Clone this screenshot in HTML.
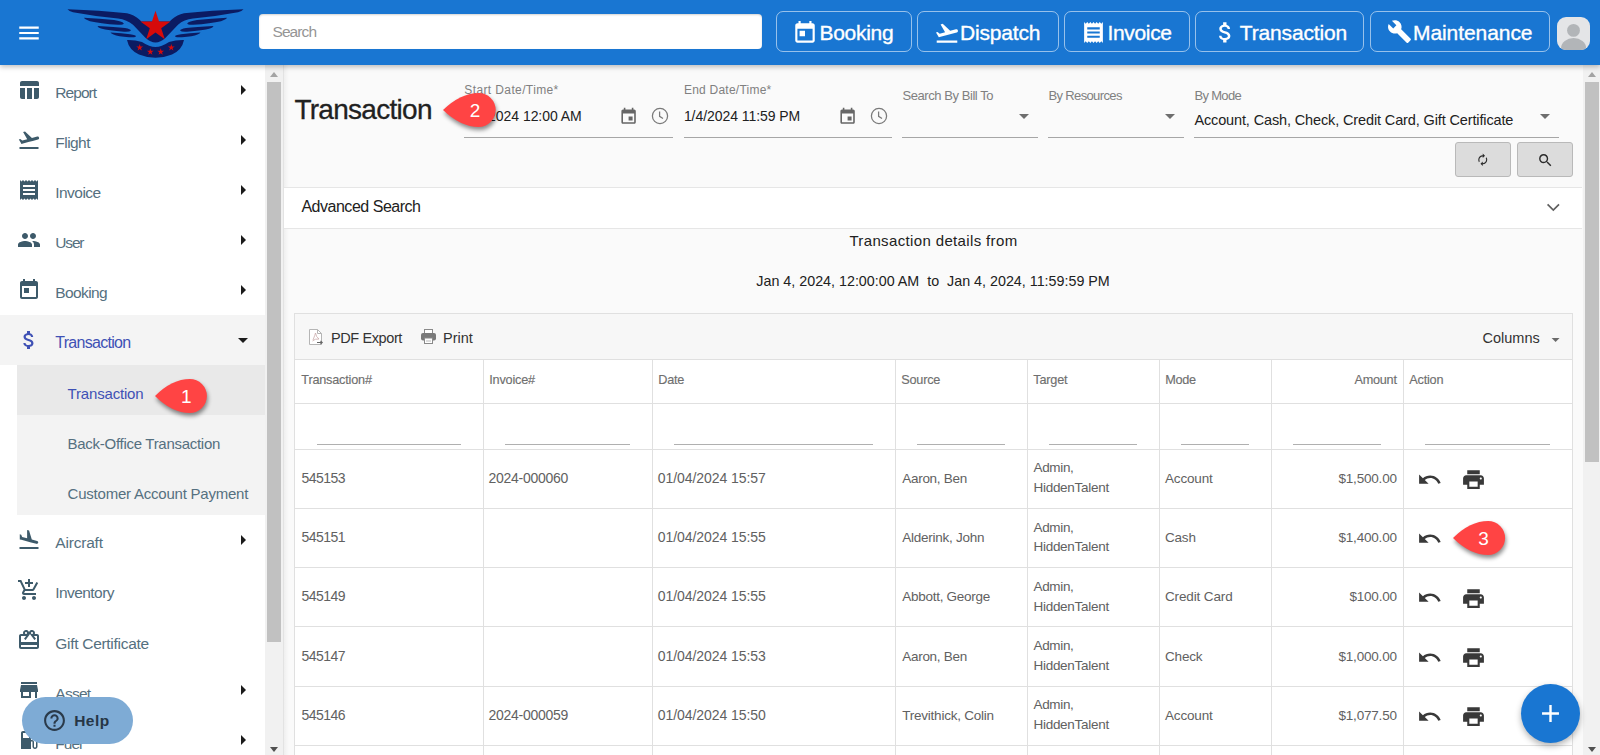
<!DOCTYPE html><html><head><meta charset="utf-8"><style>
html,body{margin:0;padding:0;}
body{width:1600px;height:755px;overflow:hidden;position:relative;background:#fafafa;font-family:"Liberation Sans",sans-serif;}
.t{position:absolute;white-space:nowrap;line-height:1;}
svg{display:block}
</style></head><body>
<div style="position:absolute;left:0px;top:65px;width:265px;height:690px;background:#fff"></div>
<div style="position:absolute;left:265px;top:65px;width:18px;height:690px;background:#f1f1f1"></div>
<div style="position:absolute;left:267px;top:82px;width:14px;height:560px;background:#c1c1c1"></div>
<div style="position:absolute;left:283px;top:65px;width:1px;height:690px;background:#e3e3e3"></div>
<div style="position:absolute;left:284px;top:65px;width:5px;height:690px;background:linear-gradient(to right,rgba(0,0,0,.045),rgba(0,0,0,0))"></div>
<div style="position:absolute;left:270px;top:72px;width:0;height:0;border-left:4px solid transparent;border-right:4px solid transparent;border-bottom:5px solid #a3a3a3"></div>
<div style="position:absolute;left:270px;top:747px;width:0;height:0;border-left:4px solid transparent;border-right:4px solid transparent;border-top:5px solid #505050"></div>
<div style="position:absolute;left:0px;top:315px;width:265px;height:50px;background:#f4f4f4"></div>
<div style="position:absolute;left:17px;top:365px;width:248px;height:150px;background:#f3f3f3"></div>
<div style="position:absolute;left:17px;top:365px;width:248px;height:50px;background:#e9e9e9"></div>
<svg style="position:absolute;left:16.5px;top:78px;" width="24" height="24" viewBox="0 0 24 24"><path fill="#3d5a6a" d="M10 10.02h5V21h-5zM17 21h3c1.1 0 2-.9 2-2v-9h-5v11zm3-18H5c-1.1 0-2 .9-2 2v3h19V5c0-1.1-.9-2-2-2zM3 19c0 1.1.9 2 2 2h3V10H3v9z"/></svg>
<div class="t" style="left:55.30px;top:84.78px;font-size:15.5px;color:#557080;letter-spacing:-0.945px;">Report</div>
<svg style="position:absolute;left:231px;top:78px;" width="24" height="24" viewBox="0 0 24 24"><path fill="#1a1a1a" d="M10 17l5-5-5-5v10z"/></svg>
<svg style="position:absolute;left:16.5px;top:128px;" width="24" height="24" viewBox="0 0 24 24"><path fill="#3d5a6a" d="M2.5 19h19v2h-19v-2zm19.57-9.36c-.21-.8-1.04-1.28-1.84-1.06L14.92 10l-6.9-6.43-1.930.51 4.14 7.17-4.97 1.33-1.97-1.54-1.45.39 1.82 3.16.77 1.33 1.6-.43 5.31-1.42 4.35-1.16L21 11.49c.81-.23 1.28-1.05 1.07-1.85z"/></svg>
<div class="t" style="left:55.30px;top:134.85px;font-size:15.5px;color:#557080;letter-spacing:-0.541px;">Flight</div>
<svg style="position:absolute;left:231px;top:128px;" width="24" height="24" viewBox="0 0 24 24"><path fill="#1a1a1a" d="M10 17l5-5-5-5v10z"/></svg>
<svg style="position:absolute;left:16.5px;top:178px;" width="24" height="24" viewBox="0 0 24 24"><path fill="#3d5a6a" d="M18 17H6v-2h12v2zm0-4H6v-2h12v2zm0-4H6V7h12v2zM3 22l1.5-1.5L6 22l1.5-1.5L9 22l1.5-1.5L12 22l1.5-1.5L15 22l1.5-1.5L18 22l1.5-1.5L21 22V2l-1.5 1.5L18 2l-1.5 1.5L15 2l-1.5 1.5L12 2l-1.5 1.5L9 2 7.5 3.5 6 2 4.5 3.5 3 2v20z"/></svg>
<div class="t" style="left:55.30px;top:184.92px;font-size:15.5px;color:#557080;letter-spacing:-0.552px;">Invoice</div>
<svg style="position:absolute;left:231px;top:178px;" width="24" height="24" viewBox="0 0 24 24"><path fill="#1a1a1a" d="M10 17l5-5-5-5v10z"/></svg>
<svg style="position:absolute;left:16.5px;top:228px;" width="24" height="24" viewBox="0 0 24 24"><path fill="#3d5a6a" d="M16 11c1.66 0 2.99-1.34 2.99-3S17.66 5 16 5c-1.66 0-3 1.34-3 3s1.34 3 3 3zm-8 0c1.66 0 2.99-1.34 2.99-3S9.66 5 8 5C6.34 5 5 6.34 5 8s1.34 3 3 3zm0 2c-2.33 0-7 1.170-7 3.5V19h14v-2.5c0-2.33-4.67-3.5-7-3.5zm8 0c-.29 0-.62.02-.97.05 1.16.84 1.97 1.97 1.97 3.45V19h6v-2.5c0-2.33-4.67-3.5-7-3.5z"/></svg>
<div class="t" style="left:55.30px;top:234.99px;font-size:15.5px;color:#557080;letter-spacing:-1.176px;">User</div>
<svg style="position:absolute;left:231px;top:228px;" width="24" height="24" viewBox="0 0 24 24"><path fill="#1a1a1a" d="M10 17l5-5-5-5v10z"/></svg>
<svg style="position:absolute;left:16.5px;top:278px;" width="24" height="24" viewBox="0 0 24 24"><path fill="#3d5a6a" d="M19 3h-1V1h-2v2H8V1H6v2H5c-1.11 0-1.99.9-1.99 2L3 19c0 1.1.89 2 2 2h14c1.1 0 2-.9 2-2V5c0-1.1-.9-2-2-2zm0 16H5V8h14v11zM7 10h5v5H7z"/></svg>
<div class="t" style="left:55.30px;top:285.06px;font-size:15.5px;color:#557080;letter-spacing:-0.619px;">Booking</div>
<svg style="position:absolute;left:231px;top:278px;" width="24" height="24" viewBox="0 0 24 24"><path fill="#1a1a1a" d="M10 17l5-5-5-5v10z"/></svg>
<svg style="position:absolute;left:16.5px;top:528px;" width="24" height="24" viewBox="0 0 24 24"><path fill="#3d5a6a" d="M2.5 19h19v2h-19v-2zm7.18-5.73l4.35 1.16 5.31 1.42c.8.21 1.62-.26 1.84-1.06.21-.8-.26-1.62-1.06-1.840l-5.31-1.42-2.76-9.02L10.12 2v8.28L5.15 8.95l-.93-2.32-1.45-.39v5.17l1.6.43 5.31 1.43z"/></svg>
<div class="t" style="left:55.30px;top:535.41px;font-size:15.5px;color:#557080;letter-spacing:-0.199px;">Aircraft</div>
<svg style="position:absolute;left:231px;top:528px;" width="24" height="24" viewBox="0 0 24 24"><path fill="#1a1a1a" d="M10 17l5-5-5-5v10z"/></svg>
<svg style="position:absolute;left:16.5px;top:578px;" width="24" height="24" viewBox="0 0 24 24"><path fill="#3d5a6a" d="M11 9h2V6h3V4h-3V1h-2v3H8v2h3v3zm-4 9c-1.1 0-1.99.9-1.99 2S5.9 22 7 22s2-.9 2-2-.9-2-2-2zm10 0c-1.1 0-1.99.9-1.99 2s.89 2 1.99 2 2-.9 2-2-.9-2-2-2zm-9.83-3.25l.03-.12.9-1.63h7.45c.75 0 1.41-.41 1.75-1.03l3.86-7.01L19.42 4h-.01l-1.1 2-2.76 5H8.53l-.13-.27L6.16 6l-.95-2-.94-2H1v2h2l3.6 7.59-1.35 2.45c-.16.28-.25.61-.25.96 0 1.1.9 2 2 2h12v-2H7.42c-.13 0-.25-.11-.25-.25z"/></svg>
<div class="t" style="left:55.30px;top:585.48px;font-size:15.5px;color:#557080;letter-spacing:-0.570px;">Inventory</div>
<svg style="position:absolute;left:16.5px;top:628px;" width="24" height="24" viewBox="0 0 24 24"><path fill="#3d5a6a" d="M20 6h-2.18c.11-.31.18-.65.18-1 0-1.66-1.34-3-3-3-1.05 0-1.96.54-2.5 1.35l-.5.67-.5-.68C10.96 2.54 10.05 2 9 2 7.34 2 6 3.34 6 5c0 .35.07.69.18 1H4c-1.11 0-1.99.89-1.99 2L2 19c0 1.11.89 2 2 2h16c1.11 0 2-.89 2-2V8c0-1.11-.89-2-2-2zm-5-2c.55 0 1 .45 1 1s-.45 1-1 1-1-.45-1-1 .45-1 1-1zM9 4c.55 0 1 .45 1 1s-.45 1-1 1-1-.45-1-1 .45-1 1-1zm11 15H4v-2h16v2zm0-5H4V8h5.08L7 10.83 8.62 12 11 8.76l1-1.36 1-1.36 1 1.36 1 1.36L17.38 12 19 10.83 16.92 8H20v6z"/></svg>
<div class="t" style="left:55.30px;top:635.55px;font-size:15.5px;color:#557080;letter-spacing:-0.293px;">Gift Certificate</div>
<svg style="position:absolute;left:16.5px;top:678px;" width="24" height="24" viewBox="0 0 24 24"><path fill="#3d5a6a" d="M20 4H4v2h16V4zm1 10v-2l-1-5H4l-1 5v2h1v6h10v-6h4v6h2v-6h1zm-9 4H6v-4h6v4z"/></svg>
<div class="t" style="left:55.30px;top:685.62px;font-size:15.5px;color:#557080;letter-spacing:-0.741px;">Asset</div>
<svg style="position:absolute;left:231px;top:678px;" width="24" height="24" viewBox="0 0 24 24"><path fill="#1a1a1a" d="M10 17l5-5-5-5v10z"/></svg>
<svg style="position:absolute;left:16.5px;top:728px;" width="24" height="24" viewBox="0 0 24 24"><path fill="#3d5a6a" d="M19.77 7.23l.01-.01-3.72-3.72L15 4.56l2.11 2.11c-.94.36-1.61 1.26-1.61 2.33 0 1.38 1.12 2.5 2.5 2.5.36 0 .69-.08 1-.21v7.21c0 .55-.45 1-1 1s-1-.45-1-1V14c0-1.1-.9-2-2-2h-1V5c0-1.1-.9-2-2-2H6c-1.1 0-2 .9-2 2v16h10v-7.5h1.5v5c0 1.38 1.12 2.5 2.5 2.5s2.5-1.12 2.5-2.5V9c0-.69-.28-1.32-.73-1.770zM12 10H6V5h6v5zm6 0c-.55 0-1-.45-1-1s.45-1 1-1 1 .45 1 1-.45 1-1 1z"/></svg>
<div class="t" style="left:55.30px;top:735.69px;font-size:15.5px;color:#557080;letter-spacing:-1.005px;">Fuel</div>
<svg style="position:absolute;left:231px;top:728px;" width="24" height="24" viewBox="0 0 24 24"><path fill="#1a1a1a" d="M10 17l5-5-5-5v10z"/></svg>
<svg style="position:absolute;left:16.5px;top:328px;" width="24" height="24" viewBox="0 0 24 24"><path fill="#3f51b5" d="M11.8 10.9c-2.27-.59-3-1.2-3-2.15 0-1.09 1.01-1.85 2.7-1.85 1.78 0 2.44.85 2.5 2.1h2.21c-.07-1.72-1.12-3.3-3.21-3.81V3h-3v2.16c-1.94.42-3.5 1.68-3.5 3.61 0 2.31 1.91 3.46 4.7 4.13 2.5.6 3 1.48 3 2.41 0 .69-.49 1.79-2.7 1.79-2.06 0-2.87-.92-2.980-2.1h-2.2c.12 2.19 1.76 3.42 3.68 3.83V21h3v-2.15c1.95-.37 3.5-1.5 3.5-3.55 0-2.84-2.43-3.81-4.7-4.4z"/></svg>
<div class="t" style="left:55.20px;top:334.76px;font-size:16px;color:#3f51b5;letter-spacing:-0.710px;">Transaction</div>
<svg style="position:absolute;left:231px;top:328px;" width="24" height="24" viewBox="0 0 24 24"><path fill="#1a1a1a" d="M7 10l5 5 5-5z"/></svg>
<div class="t" style="left:67.60px;top:386.00px;font-size:15px;color:#3f51b5;letter-spacing:-0.181px;">Transaction</div>
<div class="t" style="left:67.60px;top:436.00px;font-size:15px;color:#557080;letter-spacing:-0.285px;">Back-Office Transaction</div>
<div class="t" style="left:67.60px;top:486.00px;font-size:15px;color:#557080;letter-spacing:-0.223px;">Customer Account Payment</div>
<div style="position:absolute;left:1583px;top:65px;width:17px;height:690px;background:#f1f1f1"></div>
<div style="position:absolute;left:1585px;top:82px;width:14px;height:380px;background:#c1c1c1"></div>
<div style="position:absolute;left:1588px;top:72px;width:0;height:0;border-left:4px solid transparent;border-right:4px solid transparent;border-bottom:5px solid #a3a3a3"></div>
<div style="position:absolute;left:1588px;top:747px;width:0;height:0;border-left:4px solid transparent;border-right:4px solid transparent;border-top:5px solid #505050"></div>
<div class="t" style="left:294.40px;top:96.30px;font-size:28px;color:#212121;letter-spacing:-0.715px;-webkit-text-stroke:0.3px #212121">Transaction</div>
<div class="t" style="left:464.30px;top:83.54px;font-size:12px;color:#808080;letter-spacing:0.383px;">Start Date/Time*</div>
<div class="t" style="left:464.98px;top:108.85px;font-size:14px;color:#212121;letter-spacing:-0.051px;">1/4/2024 12:00 AM</div>
<svg style="position:absolute;left:619.3px;top:107.2px;" width="19.2" height="19.2" viewBox="0 0 24 24"><path fill="#666" d="M17 12h-5v5h5v-5zM16 1v2H8V1H6v2H5c-1.11 0-1.99.9-1.99 2L3 19c0 1.1.89 2 2 2h14c1.1 0 2-.9 2-2V5c0-1.1-.9-2-2-2h-1V1h-2zm3 18H5V8h14v11z"/></svg>
<svg style="position:absolute;left:651.3px;top:107.3px" width="18" height="18" viewBox="0 0 18 18"><circle cx="9" cy="9" r="7.6" fill="none" stroke="#7a7a7a" stroke-width="1.25"/><path d="M8.6 4.6 V9.3 L12 11.6" fill="none" stroke="#7a7a7a" stroke-width="1.25"/></svg>
<div style="position:absolute;left:464px;top:137px;width:209px;height:1px;background:#a6a6a6"></div>
<div class="t" style="left:683.90px;top:83.54px;font-size:12px;color:#808080;letter-spacing:0.242px;">End Date/Time*</div>
<div class="t" style="left:683.90px;top:108.85px;font-size:14px;color:#212121;letter-spacing:-0.055px;">1/4/2024 11:59 PM</div>
<svg style="position:absolute;left:838.2px;top:107.2px;" width="19.2" height="19.2" viewBox="0 0 24 24"><path fill="#666" d="M17 12h-5v5h5v-5zM16 1v2H8V1H6v2H5c-1.11 0-1.99.9-1.99 2L3 19c0 1.1.89 2 2 2h14c1.1 0 2-.9 2-2V5c0-1.1-.9-2-2-2h-1V1h-2zm3 18H5V8h14v11z"/></svg>
<svg style="position:absolute;left:869.9px;top:107.3px" width="18" height="18" viewBox="0 0 18 18"><circle cx="9" cy="9" r="7.6" fill="none" stroke="#7a7a7a" stroke-width="1.25"/><path d="M8.6 4.6 V9.3 L12 11.6" fill="none" stroke="#7a7a7a" stroke-width="1.25"/></svg>
<div style="position:absolute;left:684px;top:137px;width:208px;height:1px;background:#a6a6a6"></div>
<div class="t" style="left:902.50px;top:89.30px;font-size:13px;color:#808080;letter-spacing:-0.439px;">Search By Bill To</div>
<svg style="position:absolute;left:1012px;top:104px;" width="24" height="24" viewBox="0 0 24 24"><path fill="#6e6e6e" d="M7 10l5 5 5-5z"/></svg>
<div style="position:absolute;left:902px;top:137px;width:136px;height:1px;background:#a6a6a6"></div>
<div class="t" style="left:1048.40px;top:89.30px;font-size:13px;color:#808080;letter-spacing:-0.629px;">By Resources</div>
<svg style="position:absolute;left:1158px;top:104px;" width="24" height="24" viewBox="0 0 24 24"><path fill="#6e6e6e" d="M7 10l5 5 5-5z"/></svg>
<div style="position:absolute;left:1048px;top:137px;width:136px;height:1px;background:#a6a6a6"></div>
<div class="t" style="left:1194.40px;top:89.30px;font-size:13px;color:#808080;letter-spacing:-0.667px;">By Mode</div>
<div class="t" style="left:1194.40px;top:112.53px;font-size:14.5px;color:#212121;letter-spacing:-0.131px;">Account, Cash, Check, Credit Card, Gift Certificate</div>
<svg style="position:absolute;left:1533px;top:104px;" width="24" height="24" viewBox="0 0 24 24"><path fill="#6e6e6e" d="M7 10l5 5 5-5z"/></svg>
<div style="position:absolute;left:1194px;top:137px;width:365px;height:1px;background:#a6a6a6"></div>
<div style="position:absolute;left:1455px;top:142px;width:56px;height:35px;background:#dcdcdc;border:1px solid #b9b9b9;border-radius:3px;box-sizing:border-box"></div>
<div style="position:absolute;left:1517px;top:142px;width:56px;height:35px;background:#dcdcdc;border:1px solid #b9b9b9;border-radius:3px;box-sizing:border-box"></div>
<svg style="position:absolute;left:1475.65px;top:153.35px;" width="13.5" height="13.5" viewBox="0 0 24 24"><path fill="#2a2a2a" d="M12 6v3l4-4-4-4v3c-4.42 0-8 3.58-8 8 0 1.57.46 3.03 1.24 4.26L6.7 14.8c-.45-.83-.7-1.79-.7-2.8 0-3.31 2.69-6 6-6zm6.76 1.74L17.3 9.2c.44.84.7 1.79.7 2.8 0 3.31-2.69 6-6 6v-3l-4 4 4 4v-3c4.42 0 8-3.58 8-8 0-1.57-.46-3.03-1.24-4.26z"/></svg>
<svg style="position:absolute;left:1536.8px;top:151.85px;" width="16.8" height="16.8" viewBox="0 0 24 24"><path fill="#2a2a2a" d="M15.5 14h-.79l-.28-.27C15.41 12.59 16 11.11 16 9.5 16 5.91 13.09 3 9.5 3S3 5.91 3 9.5 5.91 16 9.5 16c1.61 0 3.09-.59 4.23-1.57l.27.28v.79l5 4.99L20.49 19l-4.99-5zm-6 0C7.01 14 5 11.99 5 9.5S7.01 5 9.5 5 14 7.010 14 9.5 11.99 14 9.5 14z"/></svg>
<div style="position:absolute;left:284px;top:187px;width:1298px;height:42px;background:#fff;border-top:1px solid #e6e6e6;border-bottom:1px solid #e6e6e6;box-sizing:border-box"></div>
<div class="t" style="left:301.40px;top:199.06px;font-size:16px;color:#212121;letter-spacing:-0.479px;">Advanced Search</div>
<svg style="position:absolute;left:1540px;top:196px" width="26" height="20" viewBox="1540 196 26 20"><path d="M1547.6 204.3 L1553.3 210 L1559 204.3" fill="none" stroke="#5f5f5f" stroke-width="1.7"/></svg>
<div class="t" style="left:849.40px;top:232.90px;font-size:15px;color:#212121;letter-spacing:0.360px;">Transaction details from</div>
<div class="t" style="left:756.34px;top:274.15px;font-size:14.3px;color:#212121;">Jan 4, 2024, 12:00:00 AM&nbsp; to &nbsp;Jan 4, 2024, 11:59:59 PM</div>
<div style="position:absolute;left:294px;top:313px;width:1279px;height:442px;background:#fff;border:1px solid #e0e0e0;border-bottom:none;box-sizing:border-box"></div>
<div style="position:absolute;left:295px;top:314px;width:1277px;height:45px;background:#f7f7f7;border-bottom:1px solid #e0e0e0"></div>
<div class="t" style="left:331.00px;top:330.53px;font-size:14.5px;color:#333;letter-spacing:-0.393px;">PDF Export</div>
<svg style="position:absolute;left:307px;top:328px" width="17" height="18" viewBox="0 0 17 18"><path d="M2.5 1.5 H10.5 L14.5 5.5 V16.5 H2.5Z" fill="#fff" stroke="#b5b5b5" stroke-width="1"/><path d="M10.5 1.5 V5.5 H14.5" fill="none" stroke="#b5b5b5"/><path d="M6 12 Q8 7 8.5 5 Q9 9 12 11 Q8 10.5 5.5 13" fill="none" stroke="#c9a9a9" stroke-width=".8"/><path d="M10 14.5 H15 M13.5 13 L15.2 14.5 L13.5 16" fill="none" stroke="#666" stroke-width="1.1"/></svg>
<svg style="position:absolute;left:420px;top:328px" width="17" height="17" viewBox="0 0 17 17"><rect x="4.5" y="1.5" width="8" height="4" fill="#fff" stroke="#8a8a8a"/><rect x="1" y="5" width="15" height="7.5" rx="2" fill="#7a7a7a"/><rect x="4.5" y="10" width="8" height="5.5" fill="#fff" stroke="#8a8a8a"/><path d="M6 13 H11" stroke="#bbb"/></svg>
<div class="t" style="left:443.00px;top:330.53px;font-size:14.5px;color:#333;letter-spacing:-0.029px;">Print</div>
<div class="t" style="left:1482.50px;top:331.33px;font-size:14.5px;color:#333;letter-spacing:-0.003px;">Columns</div>
<svg style="position:absolute;left:1545.9px;top:329.5px;" width="19.2" height="19.2" viewBox="0 0 24 24"><path fill="#6a6a6a" d="M7 10l5 5 5-5z"/></svg>
<div style="position:absolute;left:294px;top:403px;width:1279px;height:1px;background:#e0e0e0"></div>
<div style="position:absolute;left:294px;top:449px;width:1279px;height:1px;background:#e0e0e0"></div>
<div style="position:absolute;left:294px;top:508px;width:1279px;height:1px;background:#e0e0e0"></div>
<div style="position:absolute;left:294px;top:567px;width:1279px;height:1px;background:#e0e0e0"></div>
<div style="position:absolute;left:294px;top:626px;width:1279px;height:1px;background:#e0e0e0"></div>
<div style="position:absolute;left:294px;top:686px;width:1279px;height:1px;background:#e0e0e0"></div>
<div style="position:absolute;left:294px;top:745px;width:1279px;height:1px;background:#e0e0e0"></div>
<div style="position:absolute;left:483px;top:359px;width:1px;height:396px;background:#e0e0e0"></div>
<div style="position:absolute;left:652px;top:359px;width:1px;height:396px;background:#e0e0e0"></div>
<div style="position:absolute;left:895px;top:359px;width:1px;height:396px;background:#e0e0e0"></div>
<div style="position:absolute;left:1027px;top:359px;width:1px;height:396px;background:#e0e0e0"></div>
<div style="position:absolute;left:1159px;top:359px;width:1px;height:396px;background:#e0e0e0"></div>
<div style="position:absolute;left:1271px;top:359px;width:1px;height:396px;background:#e0e0e0"></div>
<div style="position:absolute;left:1403px;top:359px;width:1px;height:396px;background:#e0e0e0"></div>
<div class="t" style="left:301.30px;top:373.85px;font-size:12.7px;color:#6f6f6f;letter-spacing:-0.199px;-webkit-text-stroke:0.15px #6f6f6f">Transaction#</div>
<div class="t" style="left:489.30px;top:373.85px;font-size:12.7px;color:#6f6f6f;letter-spacing:-0.203px;-webkit-text-stroke:0.15px #6f6f6f">Invoice#</div>
<div class="t" style="left:658.30px;top:373.85px;font-size:12.7px;color:#6f6f6f;letter-spacing:-0.268px;-webkit-text-stroke:0.15px #6f6f6f">Date</div>
<div class="t" style="left:901.30px;top:373.85px;font-size:12.7px;color:#6f6f6f;letter-spacing:-0.241px;-webkit-text-stroke:0.15px #6f6f6f">Source</div>
<div class="t" style="left:1033.30px;top:373.85px;font-size:12.7px;color:#6f6f6f;letter-spacing:-0.212px;-webkit-text-stroke:0.15px #6f6f6f">Target</div>
<div class="t" style="left:1165.30px;top:373.85px;font-size:12.7px;color:#6f6f6f;letter-spacing:-0.318px;-webkit-text-stroke:0.15px #6f6f6f">Mode</div>
<div class="t" style="left:1354.54px;top:373.85px;font-size:12.7px;color:#6f6f6f;letter-spacing:-0.263px;-webkit-text-stroke:0.15px #6f6f6f">Amount</div>
<div class="t" style="left:1409.30px;top:373.85px;font-size:12.7px;color:#6f6f6f;letter-spacing:-0.212px;-webkit-text-stroke:0.15px #6f6f6f">Action</div>
<div style="position:absolute;left:317px;top:444px;width:144px;height:1px;background:#b0b0b0"></div>
<div style="position:absolute;left:505px;top:444px;width:125px;height:1px;background:#b0b0b0"></div>
<div style="position:absolute;left:674px;top:444px;width:199px;height:1px;background:#b0b0b0"></div>
<div style="position:absolute;left:917px;top:444px;width:88px;height:1px;background:#b0b0b0"></div>
<div style="position:absolute;left:1049px;top:444px;width:88px;height:1px;background:#b0b0b0"></div>
<div style="position:absolute;left:1181px;top:444px;width:68px;height:1px;background:#b0b0b0"></div>
<div style="position:absolute;left:1293px;top:444px;width:88px;height:1px;background:#b0b0b0"></div>
<div style="position:absolute;left:1425px;top:444px;width:125px;height:1px;background:#b0b0b0"></div>
<div class="t" style="left:301.60px;top:470.95px;font-size:14px;color:#616161;letter-spacing:-0.564px;">545153</div>
<div class="t" style="left:488.60px;top:470.95px;font-size:14px;color:#616161;letter-spacing:-0.283px;">2024-000060</div>
<div class="t" style="left:657.70px;top:470.95px;font-size:14px;color:#616161;letter-spacing:-0.053px;">01/04/2024 15:57</div>
<div class="t" style="left:902.30px;top:471.87px;font-size:13.5px;color:#616161;letter-spacing:-0.300px;">Aaron, Ben</div>
<div class="t" style="left:1033.50px;top:461.37px;font-size:13.5px;color:#616161;letter-spacing:-0.336px;">Admin,</div>
<div class="t" style="left:1033.50px;top:481.07px;font-size:13.5px;color:#616161;letter-spacing:-0.287px;">HiddenTalent</div>
<div class="t" style="left:1165.00px;top:471.87px;font-size:13.5px;color:#616161;letter-spacing:-0.163px;">Account</div>
<div class="t" style="left:1338.44px;top:471.87px;font-size:13.5px;color:#616161;letter-spacing:-0.188px;">$1,500.00</div>
<svg style="position:absolute;left:1417.2px;top:466.9px;" width="25.3" height="25.3" viewBox="0 0 24 24"><path fill="#393939" d="M12.5 8c-2.65 0-5.05.99-6.9 2.6L2 7v9h9l-3.62-3.62c1.39-1.16 3.16-1.88 5.12-1.88 3.54 0 6.55 2.31 7.6 5.5l2.37-.78C21.08 11.03 17.15 8 12.5 8z"/></svg>
<svg style="position:absolute;left:1461.1px;top:467.0px;" width="25" height="25" viewBox="0 0 24 24"><path fill="#393939" d="M19 8H5c-1.66 0-3 1.34-3 3v6h4v4h12v-4h4v-6c0-1.66-1.34-3-3-3zm-3 11H8v-5h8v5zm3-7c-.55 0-1-.45-1-1s.45-1 1-1 1 .45 1 1-.45 1-1 1zm-1-9H6v4h12V3z"/></svg>
<div class="t" style="left:301.60px;top:530.20px;font-size:14px;color:#616161;letter-spacing:-0.564px;">545151</div>
<div class="t" style="left:657.70px;top:530.20px;font-size:14px;color:#616161;letter-spacing:-0.053px;">01/04/2024 15:55</div>
<div class="t" style="left:902.30px;top:531.12px;font-size:13.5px;color:#616161;letter-spacing:-0.263px;">Alderink, John</div>
<div class="t" style="left:1033.50px;top:520.62px;font-size:13.5px;color:#616161;letter-spacing:-0.336px;">Admin,</div>
<div class="t" style="left:1033.50px;top:540.32px;font-size:13.5px;color:#616161;letter-spacing:-0.287px;">HiddenTalent</div>
<div class="t" style="left:1165.00px;top:531.12px;font-size:13.5px;color:#616161;letter-spacing:-0.210px;">Cash</div>
<div class="t" style="left:1338.44px;top:531.12px;font-size:13.5px;color:#616161;letter-spacing:-0.188px;">$1,400.00</div>
<svg style="position:absolute;left:1417.2px;top:526.15px;" width="25.3" height="25.3" viewBox="0 0 24 24"><path fill="#393939" d="M12.5 8c-2.65 0-5.05.99-6.9 2.6L2 7v9h9l-3.62-3.62c1.39-1.16 3.16-1.88 5.12-1.88 3.54 0 6.55 2.31 7.6 5.5l2.37-.78C21.08 11.03 17.15 8 12.5 8z"/></svg>
<svg style="position:absolute;left:1461.1px;top:526.25px;" width="25" height="25" viewBox="0 0 24 24"><path fill="#393939" d="M19 8H5c-1.66 0-3 1.34-3 3v6h4v4h12v-4h4v-6c0-1.66-1.34-3-3-3zm-3 11H8v-5h8v5zm3-7c-.55 0-1-.45-1-1s.45-1 1-1 1 .45 1 1-.45 1-1 1zm-1-9H6v4h12V3z"/></svg>
<div class="t" style="left:301.60px;top:589.45px;font-size:14px;color:#616161;letter-spacing:-0.564px;">545149</div>
<div class="t" style="left:657.70px;top:589.45px;font-size:14px;color:#616161;letter-spacing:-0.053px;">01/04/2024 15:55</div>
<div class="t" style="left:902.30px;top:590.37px;font-size:13.5px;color:#616161;letter-spacing:-0.282px;">Abbott, George</div>
<div class="t" style="left:1033.50px;top:579.87px;font-size:13.5px;color:#616161;letter-spacing:-0.336px;">Admin,</div>
<div class="t" style="left:1033.50px;top:599.57px;font-size:13.5px;color:#616161;letter-spacing:-0.287px;">HiddenTalent</div>
<div class="t" style="left:1165.00px;top:590.37px;font-size:13.5px;color:#616161;letter-spacing:-0.138px;">Credit Card</div>
<div class="t" style="left:1349.42px;top:590.37px;font-size:13.5px;color:#616161;letter-spacing:-0.203px;">$100.00</div>
<svg style="position:absolute;left:1417.2px;top:585.4px;" width="25.3" height="25.3" viewBox="0 0 24 24"><path fill="#393939" d="M12.5 8c-2.65 0-5.05.99-6.9 2.6L2 7v9h9l-3.62-3.62c1.39-1.16 3.16-1.88 5.12-1.88 3.54 0 6.55 2.31 7.6 5.5l2.37-.78C21.08 11.03 17.15 8 12.5 8z"/></svg>
<svg style="position:absolute;left:1461.1px;top:585.5px;" width="25" height="25" viewBox="0 0 24 24"><path fill="#393939" d="M19 8H5c-1.66 0-3 1.34-3 3v6h4v4h12v-4h4v-6c0-1.66-1.34-3-3-3zm-3 11H8v-5h8v5zm3-7c-.55 0-1-.45-1-1s.45-1 1-1 1 .45 1 1-.45 1-1 1zm-1-9H6v4h12V3z"/></svg>
<div class="t" style="left:301.60px;top:648.70px;font-size:14px;color:#616161;letter-spacing:-0.564px;">545147</div>
<div class="t" style="left:657.70px;top:648.70px;font-size:14px;color:#616161;letter-spacing:-0.053px;">01/04/2024 15:53</div>
<div class="t" style="left:902.30px;top:649.62px;font-size:13.5px;color:#616161;letter-spacing:-0.300px;">Aaron, Ben</div>
<div class="t" style="left:1033.50px;top:639.12px;font-size:13.5px;color:#616161;letter-spacing:-0.336px;">Admin,</div>
<div class="t" style="left:1033.50px;top:658.82px;font-size:13.5px;color:#616161;letter-spacing:-0.287px;">HiddenTalent</div>
<div class="t" style="left:1165.00px;top:649.62px;font-size:13.5px;color:#616161;letter-spacing:-0.191px;">Check</div>
<div class="t" style="left:1338.44px;top:649.62px;font-size:13.5px;color:#616161;letter-spacing:-0.188px;">$1,000.00</div>
<svg style="position:absolute;left:1417.2px;top:644.65px;" width="25.3" height="25.3" viewBox="0 0 24 24"><path fill="#393939" d="M12.5 8c-2.65 0-5.05.99-6.9 2.6L2 7v9h9l-3.62-3.62c1.39-1.16 3.16-1.88 5.12-1.88 3.54 0 6.55 2.31 7.6 5.5l2.37-.78C21.08 11.03 17.15 8 12.5 8z"/></svg>
<svg style="position:absolute;left:1461.1px;top:644.75px;" width="25" height="25" viewBox="0 0 24 24"><path fill="#393939" d="M19 8H5c-1.66 0-3 1.34-3 3v6h4v4h12v-4h4v-6c0-1.66-1.34-3-3-3zm-3 11H8v-5h8v5zm3-7c-.55 0-1-.45-1-1s.45-1 1-1 1 .45 1 1-.45 1-1 1zm-1-9H6v4h12V3z"/></svg>
<div class="t" style="left:301.60px;top:707.95px;font-size:14px;color:#616161;letter-spacing:-0.564px;">545146</div>
<div class="t" style="left:488.60px;top:707.95px;font-size:14px;color:#616161;letter-spacing:-0.283px;">2024-000059</div>
<div class="t" style="left:657.70px;top:707.95px;font-size:14px;color:#616161;letter-spacing:-0.053px;">01/04/2024 15:50</div>
<div class="t" style="left:902.30px;top:708.87px;font-size:13.5px;color:#616161;letter-spacing:-0.239px;">Trevithick, Colin</div>
<div class="t" style="left:1033.50px;top:698.37px;font-size:13.5px;color:#616161;letter-spacing:-0.336px;">Admin,</div>
<div class="t" style="left:1033.50px;top:718.07px;font-size:13.5px;color:#616161;letter-spacing:-0.287px;">HiddenTalent</div>
<div class="t" style="left:1165.00px;top:708.87px;font-size:13.5px;color:#616161;letter-spacing:-0.163px;">Account</div>
<div class="t" style="left:1338.44px;top:708.87px;font-size:13.5px;color:#616161;letter-spacing:-0.188px;">$1,077.50</div>
<svg style="position:absolute;left:1417.2px;top:703.9px;" width="25.3" height="25.3" viewBox="0 0 24 24"><path fill="#393939" d="M12.5 8c-2.65 0-5.05.99-6.9 2.6L2 7v9h9l-3.62-3.62c1.39-1.16 3.16-1.88 5.12-1.88 3.54 0 6.55 2.31 7.6 5.5l2.37-.78C21.08 11.03 17.15 8 12.5 8z"/></svg>
<svg style="position:absolute;left:1461.1px;top:704.0px;" width="25" height="25" viewBox="0 0 24 24"><path fill="#393939" d="M19 8H5c-1.66 0-3 1.34-3 3v6h4v4h12v-4h4v-6c0-1.66-1.34-3-3-3zm-3 11H8v-5h8v5zm3-7c-.55 0-1-.45-1-1s.45-1 1-1 1 .45 1 1-.45 1-1 1zm-1-9H6v4h12V3z"/></svg>
<div style="position:absolute;left:0;top:0;width:1600px;height:65px;background:#1976d2;box-shadow:0 2px 5px rgba(0,0,0,.25)"></div>
<svg style="position:absolute;left:16px;top:19.5px;" width="26" height="26" viewBox="0 0 24 24"><path fill="#fff" d="M3 18h18v-2H3v2zm0-5h18v-2H3v2zm0-7v2h18V6H3z"/></svg>
<div style="position:absolute;left:259px;top:14px;width:503px;height:35px;background:#fff;border-radius:4px;box-shadow:inset 0 1px 2px rgba(0,0,0,.18)"></div>
<div class="t" style="left:272.50px;top:24.18px;font-size:15.5px;color:#959595;letter-spacing:-0.923px;">Search</div>
<div style="position:absolute;left:776px;top:11px;width:136px;height:41px;border:1px solid rgba(255,255,255,.55);border-radius:7px;box-sizing:border-box"></div>
<div style="position:absolute;left:917px;top:11px;width:142px;height:41px;border:1px solid rgba(255,255,255,.55);border-radius:7px;box-sizing:border-box"></div>
<div style="position:absolute;left:1064px;top:11px;width:126px;height:41px;border:1px solid rgba(255,255,255,.55);border-radius:7px;box-sizing:border-box"></div>
<div style="position:absolute;left:1195px;top:11px;width:169px;height:41px;border:1px solid rgba(255,255,255,.55);border-radius:7px;box-sizing:border-box"></div>
<div style="position:absolute;left:1370px;top:11px;width:180px;height:41px;border:1px solid rgba(255,255,255,.55);border-radius:7px;box-sizing:border-box"></div>
<div class="t" style="left:819.40px;top:21.52px;font-size:21px;color:#fff;letter-spacing:-0.265px;-webkit-text-stroke:0.35px #fff">Booking</div>
<svg style="position:absolute;left:792.4px;top:19.6px;" width="26" height="26" viewBox="0 0 24 24"><path fill="#fff" d="M19 3h-1V1h-2v2H8V1H6v2H5c-1.11 0-1.99.9-1.99 2L3 19c0 1.1.89 2 2 2h14c1.1 0 2-.9 2-2V5c0-1.1-.9-2-2-2zm0 16H5V8h14v11zM7 10h5v5H7z"/></svg>
<div class="t" style="left:960.00px;top:21.52px;font-size:21px;color:#fff;letter-spacing:-0.172px;-webkit-text-stroke:0.35px #fff">Dispatch</div>
<svg style="position:absolute;left:934.3px;top:20px;" width="26" height="26" viewBox="0 0 24 24"><path fill="#fff" d="M2.5 19h19v2h-19v-2zm19.57-9.36c-.21-.8-1.04-1.28-1.84-1.06L14.92 10l-6.9-6.43-1.930.51 4.14 7.17-4.97 1.33-1.97-1.54-1.45.39 1.82 3.16.77 1.33 1.6-.43 5.31-1.42 4.35-1.16L21 11.49c.81-.23 1.28-1.05 1.07-1.85z"/></svg>
<div class="t" style="left:1107.50px;top:21.52px;font-size:21px;color:#fff;letter-spacing:-0.340px;-webkit-text-stroke:0.35px #fff">Invoice</div>
<svg style="position:absolute;left:1081px;top:20px;" width="25" height="25" viewBox="0 0 24 24"><path fill="#fff" d="M18 17H6v-2h12v2zm0-4H6v-2h12v2zm0-4H6V7h12v2zM3 22l1.5-1.5L6 22l1.5-1.5L9 22l1.5-1.5L12 22l1.5-1.5L15 22l1.5-1.5L18 22l1.5-1.5L21 22V2l-1.5 1.5L18 2l-1.5 1.5L15 2l-1.5 1.5L12 2l-1.5 1.5L9 2 7.5 3.5 6 2 4.5 3.5 3 2v20z"/></svg>
<div class="t" style="left:1239.80px;top:21.52px;font-size:21px;color:#fff;letter-spacing:-0.164px;-webkit-text-stroke:0.35px #fff">Transaction</div>
<svg style="position:absolute;left:1212px;top:18.9px;" width="26.75" height="26.75" viewBox="0 0 24 24"><path fill="#fff" d="M11.8 10.9c-2.27-.59-3-1.2-3-2.15 0-1.09 1.01-1.85 2.7-1.85 1.78 0 2.44.85 2.5 2.1h2.21c-.07-1.72-1.12-3.3-3.21-3.81V3h-3v2.16c-1.94.42-3.5 1.68-3.5 3.61 0 2.31 1.91 3.46 4.7 4.13 2.5.6 3 1.48 3 2.41 0 .69-.49 1.79-2.7 1.79-2.06 0-2.87-.92-2.980-2.1h-2.2c.12 2.19 1.76 3.42 3.68 3.83V21h3v-2.15c1.95-.37 3.5-1.5 3.5-3.55 0-2.84-2.43-3.81-4.7-4.4z"/></svg>
<div class="t" style="left:1413.00px;top:21.52px;font-size:21px;color:#fff;letter-spacing:-0.075px;-webkit-text-stroke:0.35px #fff">Maintenance</div>
<svg style="position:absolute;left:1387px;top:19.4px;" width="25" height="25" viewBox="0 0 24 24"><path fill="#fff" d="M22.7 19l-9.1-9.1c.9-2.3.4-5-1.5-6.9-2-2-5-2.4-7.4-1.3L9 6 6 9 1.6 4.7C.4 7.1.9 10.1 2.9 12.1c1.9 1.9 4.6 2.4 6.9 1.5l9.1 9.1c.4.4 1 .4 1.4 0l2.3-2.3c.5-.4.5-1.1.1-1.4z"/></svg>
<svg style="position:absolute;left:1557px;top:17px" width="33" height="33" viewBox="0 0 33 33"><defs><clipPath id="av"><rect x="0" y="0" width="33" height="33" rx="9"/></clipPath></defs><rect x="0" y="0" width="33" height="33" rx="9" fill="#e4e5e7"/><g clip-path="url(#av)"><circle cx="16.5" cy="13.4" r="6.4" fill="#b2b5b8"/><ellipse cx="16.6" cy="31" rx="12.5" ry="10" fill="#b2b5b8"/></g></svg>
<svg style="position:absolute;left:60px;top:0" width="190" height="65" viewBox="60 0 190 65">
<g fill="#0b1b62">
<path d="M67.5 9.2 Q100 10.2 127 13.3 Q134 14.8 139 19.3 L141.4 21.4 L169.6 21.4 L172 19.3 Q177 14.8 184 13.3 Q211 10.2 243.5 9.2 Q242 11 238 12.2 Q215 16.5 193 18.5 Q184 19.2 178 24.7 L165.6 37.8 Q160.5 42.6 155.5 42.6 Q150.5 42.6 145.4 37.8 L133 24.7 Q127 19.8 118 18.5 Q96 16.5 73 12.2 Q69 11 67.5 9.2Z"/>
<path d="M84 17.8 Q100 18.6 114 20.1 Q122 21.3 123.8 23.4 Q123.5 25 118 24.8 Q100 23.6 90 21.2 Q85 19.6 84 17.8Z"/>
<path d="M97.5 25.9 Q115 26.8 125 28.1 Q130.8 29.1 130.8 30.7 Q129.5 32 124 31.7 Q108 30.6 101 28.6 Q98 27.4 97.5 25.9Z"/>
<path d="M110.5 32.5 Q122 33.3 130 34.3 Q136.3 35.2 136 36.5 Q134.5 37.6 129 37.3 Q118 36.6 113.5 34.6 Q111 33.6 110.5 32.5Z"/>
<path d="M227 17.8 Q211 18.6 197 20.1 Q189 21.3 187.2 23.4 Q187.5 25 193 24.8 Q211 23.6 221 21.2 Q226 19.6 227 17.8Z"/>
<path d="M213.5 25.9 Q196 26.8 186 28.1 Q180.2 29.1 180.2 30.7 Q181.5 32 187 31.7 Q203 30.6 210 28.6 Q213 27.4 213.5 25.9Z"/>
<path d="M200.5 32.5 Q189 33.3 181 34.3 Q174.7 35.2 175 36.5 Q176.5 37.6 182 37.3 Q193 36.6 197.5 34.6 Q200 33.6 200.5 32.5Z"/>
<path d="M127 40 Q135 39.8 142 42 Q149.5 47 155.5 47 Q161.5 47 169 42 Q176 39.8 184 40 Q182 50 172 54.5 Q164 57.8 155.5 57.8 Q147 57.8 139 54.5 Q129 50 127 40Z"/>
</g>
<g fill="#d60a0a">
<path d="M155.50 10.70 L159.05 21.62 L170.53 21.62 L161.24 28.37 L164.79 39.28 L155.50 32.54 L146.21 39.28 L149.76 28.37 L140.47 21.62 L151.95 21.62Z"/>
<path d="M139.70 44.10 L140.51 46.59 L143.12 46.59 L141.01 48.12 L141.82 50.61 L139.70 49.08 L137.58 50.61 L138.39 48.12 L136.28 46.59 L138.89 46.59Z"/><path d="M150.30 48.20 L151.11 50.69 L153.72 50.69 L151.61 52.22 L152.42 54.71 L150.30 53.18 L148.18 54.71 L148.99 52.22 L146.88 50.69 L149.49 50.69Z"/><path d="M160.70 48.20 L161.51 50.69 L164.12 50.69 L162.01 52.22 L162.82 54.71 L160.70 53.18 L158.58 54.71 L159.39 52.22 L157.28 50.69 L159.89 50.69Z"/><path d="M171.30 44.10 L172.11 46.59 L174.72 46.59 L172.61 48.12 L173.42 50.61 L171.30 49.08 L169.18 50.61 L169.99 48.12 L167.88 46.59 L170.49 46.59Z"/>
</g>
</svg>
<div style="position:absolute;left:1521px;top:684px;width:59px;height:59px;border-radius:50%;background:#1976d2;box-shadow:0 3px 6px rgba(0,0,0,.3)"></div>
<svg style="position:absolute;left:1536px;top:699px;" width="29" height="29" viewBox="0 0 24 24"><path fill="#fff" d="M19 13h-6v6h-2v-6H5v-2h6V5h2v6h6v2z"/></svg>
<div style="position:absolute;left:21.7px;top:696.5px;width:111.3px;height:47.3px;border-radius:24px;background:#7eabd5"></div>
<svg style="position:absolute;left:41.5px;top:707.5px;" width="25" height="25" viewBox="0 0 24 24"><path fill="#2a3a4a" d="M11 18h2v-2h-2v2zm1-16C6.48 2 2 6.48 2 12s4.48 10 10 10 10-4.48 10-10S17.52 2 12 2zm0 18c-4.41 0-8-3.59-8-8s3.59-8 8-8 8 3.59 8 8-3.59 8-8 8zm0-14c-2.21 0-4 1.79-4 4h2c0-1.1.9-2 2-2s2 .9 2 2c0 2-3 1.75-3 5h2c0-2.25 3-2.5 3-5 0-2.21-1.79-4-4-4z"/></svg>
<div class="t" style="left:74.20px;top:713.18px;font-size:15.5px;color:#263646;font-weight:bold;letter-spacing:0.470px;">Help</div>
<svg style="position:absolute;left:439.3px;top:88.7px;overflow:visible;filter:drop-shadow(1px 3px 2px rgba(0,0,0,.45))" width="60.69999999999999" height="42" viewBox="439.3 88.7 60.69999999999999 42"><path fill="#ff4444" d="M443.3 109.7 Q461 92.7 479 92.7 A17 17 0 0 1 479 126.7 Q461 126.7 443.3 109.7Z"/></svg>
<div class="t" style="left:469.72px;top:100.62px;font-size:19px;color:#fff;">2</div>
<svg style="position:absolute;left:151.3px;top:375px;overflow:visible;filter:drop-shadow(1px 3px 2px rgba(0,0,0,.45))" width="59.89999999999998" height="42" viewBox="151.3 375 59.89999999999998 42"><path fill="#ff4444" d="M155.3 396 Q172.2 379 190.2 379 A17 17 0 0 1 190.2 413 Q172.2 413 155.3 396Z"/></svg>
<div class="t" style="left:180.92px;top:386.92px;font-size:19px;color:#fff;">1</div>
<svg style="position:absolute;left:1448.5px;top:516.7px;overflow:visible;filter:drop-shadow(1px 3px 2px rgba(0,0,0,.45))" width="60.09999999999991" height="42" viewBox="1448.5 516.7 60.09999999999991 42"><path fill="#ff4444" d="M1452.5 537.7 Q1469.6 520.7 1487.6 520.7 A17 17 0 0 1 1487.6 554.7 Q1469.6 554.7 1452.5 537.7Z"/></svg>
<div class="t" style="left:1478.32px;top:528.62px;font-size:19px;color:#fff;">3</div>
</body></html>
